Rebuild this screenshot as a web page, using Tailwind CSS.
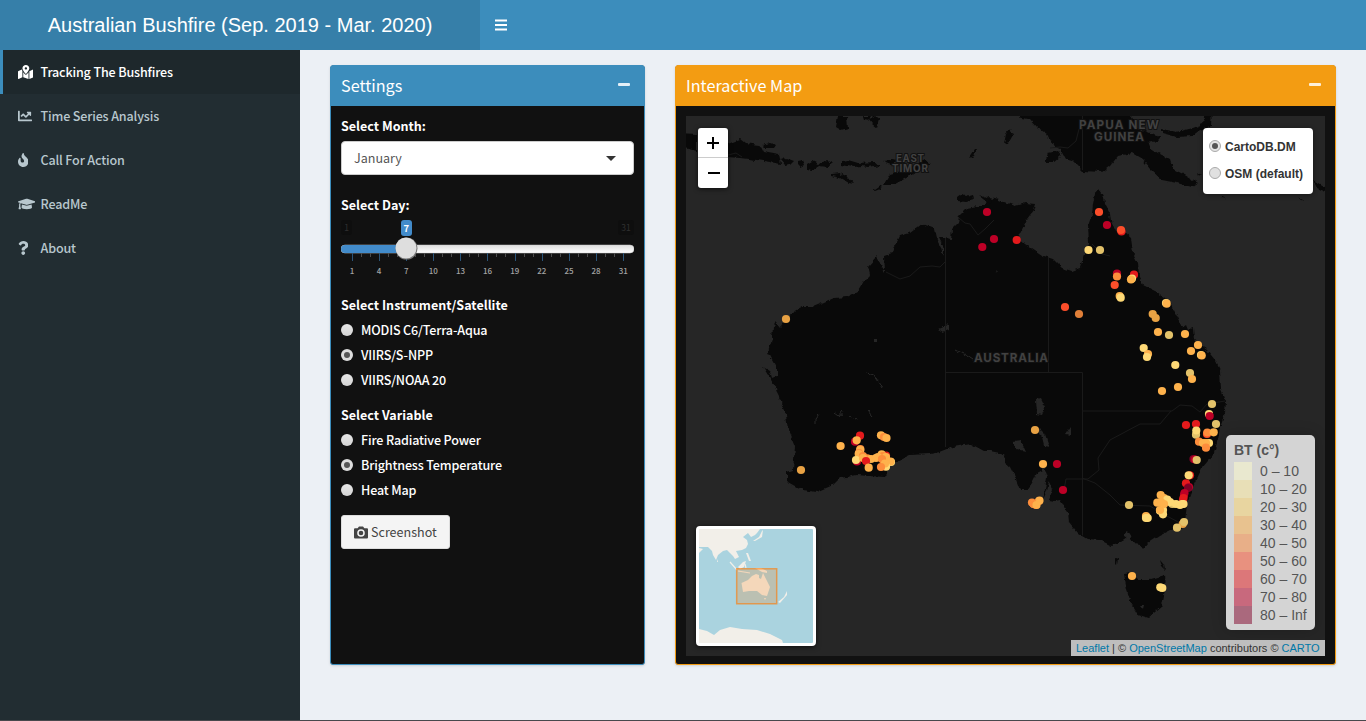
<!DOCTYPE html>
<html lang="en">
<head>
<meta charset="utf-8">
<title>Australian Bushfire (Sep. 2019 - Mar. 2020)</title>
<script src="https://cdn.jsdelivr.net/npm/@tailwindcss/browser@4"></script>
</head>
<body class="relative flex h-[721px] w-[1366px] flex-col overflow-hidden bg-[#ecf0f5] font-['Noto_Sans_CJK_SC',sans-serif] text-[12.55px] leading-5 text-[#333]">
<header class="flex h-[50px] shrink-0 bg-[#3c8dbc] text-white">
  <div class="flex w-[480px] items-center justify-center bg-[#367fa9] font-['Liberation_Sans',sans-serif] text-[20px]">Australian Bushfire (Sep. 2019 - Mar. 2020)</div>
  <div class="flex items-center px-[15px]"><svg class="h-3 w-3" viewBox="0 0 12 12" fill="#fff"><path d="M0 0.500h12v2H0zM0 5h12v2H0zM0 9.500h12v2H0z"/></svg></div>
</header>
<div class="flex min-h-0 flex-1">
  <aside class="w-[300px] shrink-0 bg-[#222d32] font-medium tracking-[-0.15px] text-[#b8c7ce]">
    <nav class="flex flex-col">
      <a class="flex h-11 items-center border-l-3 border-[#3c8dbc] bg-[#1e282c] pl-[14.500px] text-white"><span class="w-[23px]"><svg class="h-3.5 w-[15.75px]" viewBox="0 0 576 512" fill="currentColor"><path d="M288 0c-69.59 0-126 56.41-126 126 0 56.26 82.35 158.8 113.9 196.02 6.39 7.54 17.82 7.54 24.2 0C331.65 284.8 414 182.26 414 126 414 56.41 357.59 0 288 0zm0 168c-23.2 0-42-18.8-42-42s18.8-42 42-42 42 18.8 42 42-18.8 42-42 42zM20.12 215.95A32.006 32.006 0 0 0 0 245.66v250.32c0 11.32 11.43 19.06 21.94 14.86L160 448V214.92c-8.84-15.98-16.07-31.54-21.25-46.42L20.12 215.95zM288 359.67c-14.07 0-27.38-6.18-36.51-16.96-19.66-23.2-40.57-49.62-59.49-76.72v182l192 64V266c-18.92 27.09-39.82 53.52-59.49 76.72-9.13 10.77-22.44 16.95-36.51 16.95zm266.06-198.51L416 224v288l139.88-55.95A31.996 31.996 0 0 0 576 426.34V176.02c0-11.32-11.43-19.06-21.94-14.86z"/></svg></span><span>Tracking The Bushfires</span></a>
      <a class="flex h-11 items-center border-l-3 border-transparent pl-[14.500px]"><span class="w-[23px]"><svg class="h-3.5 w-3.5" viewBox="0 0 512 512" fill="currentColor"><path d="M496 384H64V80c0-8.84-7.16-16-16-16H16C7.16 64 0 71.16 0 80v336c0 17.67 14.33 32 32 32h464c8.84 0 16-7.16 16-16v-32c0-8.84-7.16-16-16-16zM464 96H345.94c-21.38 0-32.09 25.85-16.97 40.97l32.4 32.4L288 242.75l-73.37-73.37c-12.5-12.5-32.76-12.5-45.25 0l-68.69 68.69c-6.25 6.25-6.25 16.38 0 22.63l22.62 22.62c6.25 6.25 16.38 6.25 22.63 0L192 237.25l73.37 73.37c12.5 12.5 32.76 12.5 45.25 0l96-96 32.4 32.4c15.12 15.12 40.97 4.41 40.97-16.97V112c.01-8.84-7.15-16-15.99-16z"/></svg></span><span>Time Series Analysis</span></a>
      <a class="flex h-11 items-center border-l-3 border-transparent pl-[14.500px]"><span class="w-[23px]"><svg class="h-3.5 w-[10.5px]" viewBox="0 0 384 512" fill="currentColor"><path d="M216 23.86c0-23.8-30.65-32.77-44.15-13.04C48 191.85 224 200 224 288c0 35.63-29.11 64.46-64.85 63.99-35.17-.45-63.15-29.77-63.15-64.94v-85.51c0-21.7-26.47-32.23-41.43-16.5C27.8 213.16 0 261.33 0 320c0 105.87 86.13 192 192 192s192-86.13 192-192c0-170.29-168-193-168-296.14z"/></svg></span><span>Call For Action</span></a>
      <a class="flex h-11 items-center border-l-3 border-transparent pl-[14.500px]"><span class="w-[23px]"><svg class="h-3.5 w-[17.5px]" viewBox="0 0 640 512" fill="currentColor"><path d="M622.34 153.2L343.4 67.5c-15.2-4.67-31.6-4.67-46.79 0L17.66 153.2c-23.54 7.23-23.54 38.36 0 45.59l48.63 14.94c-10.67 13.19-17.23 29.28-17.88 46.9C38.78 266.15 32 276.11 32 288c0 10.78 5.68 19.85 13.86 25.65L20.33 428.53C18.11 438.52 25.71 448 35.94 448h56.11c10.24 0 17.84-9.48 15.62-19.47L82.14 313.65C90.32 307.85 96 298.78 96 288c0-11.57-6.47-21.25-15.66-26.87.76-15.02 8.44-28.3 20.69-36.72L296.6 284.5c9.06 2.78 26.44 6.25 46.79 0l278.95-85.7c23.55-7.24 23.55-38.36 0-45.6zM352.79 315.09c-28.53 8.76-52.84 3.92-65.59 0l-145.02-44.55L128 384c0 35.35 85.96 64 192 64s192-28.65 192-64l-14.18-113.47-145.03 44.56z"/></svg></span><span>ReadMe</span></a>
      <a class="flex h-11 items-center border-l-3 border-transparent pl-[14.500px]"><span class="w-[23px]"><svg class="h-3.5 w-[10.5px]" viewBox="0 0 384 512" fill="currentColor"><path d="M202.021 0C122.202 0 70.503 32.703 29.914 91.026c-7.363 10.58-5.093 25.086 5.178 32.874l43.138 32.709c10.373 7.865 25.132 6.026 33.253-4.148 25.049-31.381 43.63-49.449 82.757-49.449 30.764 0 68.816 19.799 68.816 49.631 0 22.552-18.617 34.134-48.993 51.164-35.423 19.86-82.299 44.576-82.299 106.405V320c0 13.255 10.745 24 24 24h72.471c13.255 0 24-10.745 24-24v-5.773c0-42.86 125.268-44.645 125.268-160.627C377.504 66.256 286.902 0 202.021 0zM192 373.459c-38.196 0-69.271 31.075-69.271 69.271 0 38.195 31.075 69.27 69.271 69.27s69.271-31.075 69.271-69.271-31.075-69.27-69.271-69.27z"/></svg></span><span>About</span></a>
    </nav>
  </aside>
  <main class="flex items-start gap-[30px] pt-[15px] pl-[30px]">
    <section class="flex h-[600px] w-[315px] flex-col rounded-[3px] border border-[#3c8dbc] bg-[#111] shadow-sm">
      <div class="flex h-10 shrink-0 items-center justify-between bg-[#3c8dbc] pr-3.5 pb-[3px] pl-2.5 text-white"><h3 class="text-[16.200px] leading-5">Settings</h3><span class="h-[3px] w-3 rounded-[1px] bg-[#e4f0f8]"></span></div>
      <div class="flex flex-col px-2.5 pt-2.5 text-white">
        <label class="h-[25px] font-bold">Select Month:</label>
        <div class="flex h-[34px] items-center justify-between rounded-[4px] border border-[#ccc] bg-white pr-[17px] pl-3 text-[#555]"><span>January</span><svg class="h-[5px] w-[10px]" viewBox="0 0 10 5"><path d="M0 0h10L5 5z" fill="#333"/></svg></div>
        <label class="mt-5 h-5 font-bold">Select Day:</label>
        <svg class="h-[65px] w-[293px]" viewBox="341 215 293 65" id="slider">
          <defs><linearGradient id="bar" x1="0" y1="0" x2="0" y2="1"><stop offset="0" stop-color="#ddd"/><stop offset="1" stop-color="#fff"/></linearGradient></defs>
          <g font-size="8.5" text-anchor="middle" fill="#303030"><rect x="341" y="220" width="11" height="15" rx="3" fill="#0e0e0e"/><text x="346.5" y="231">1</text><rect x="618" y="220" width="16" height="15" rx="3" fill="#0e0e0e"/><text x="626" y="231">31</text></g>
          <rect x="341" y="245" width="293" height="8" rx="4" fill="url(#bar)" stroke="#ccc" stroke-width=".5"/>
          <path d="M406 245h-61a4 4 0 0 0 0 8h61z" fill="#428bca"/>
          <g id="ticks"></g>
          <rect x="401" y="220" width="11" height="16" rx="3" fill="#428bca"/><text x="406.4" y="231.5" font-size="9.5" font-weight="700" fill="#fff" text-anchor="middle">7</text>
          <circle cx="406.5" cy="248.6" r="11" fill="#777"/><circle cx="406" cy="248" r="10.5" fill="#dedede"/>
        </svg>
        <label class="mt-[15px] h-5 font-bold">Select Instrument/Satellite</label>
        <div class="mt-[5px] flex flex-col gap-[5px] font-medium tracking-[-0.15px]">
          <div class="flex items-center gap-2"><i class="size-3 rounded-full bg-linear-to-b from-[#e8e8e8] to-[#d4d4d4]"></i>MODIS C6/Terra-Aqua</div>
          <div class="flex items-center gap-2"><i class="flex size-3 items-center justify-center rounded-full bg-[#dcdcdc]"><b class="size-1.5 rounded-full bg-[#555]"></b></i>VIIRS/S-NPP</div>
          <div class="flex items-center gap-2"><i class="size-3 rounded-full bg-linear-to-b from-[#e8e8e8] to-[#d4d4d4]"></i>VIIRS/NOAA 20</div>
        </div>
        <label class="mt-[15px] h-5 font-bold">Select Variable</label>
        <div class="mt-[5px] flex flex-col gap-[5px] font-medium tracking-[-0.15px]">
          <div class="flex items-center gap-2"><i class="size-3 rounded-full bg-linear-to-b from-[#e8e8e8] to-[#d4d4d4]"></i>Fire Radiative Power</div>
          <div class="flex items-center gap-2"><i class="flex size-3 items-center justify-center rounded-full bg-[#dcdcdc]"><b class="size-1.5 rounded-full bg-[#555]"></b></i>Brightness Temperature</div>
          <div class="flex items-center gap-2"><i class="size-3 rounded-full bg-linear-to-b from-[#e8e8e8] to-[#d4d4d4]"></i>Heat Map</div>
        </div>
        <div class="mt-[15px] flex h-[34px] w-[109px] items-center gap-[3px] rounded-[3px] border border-[#ddd] bg-[#f4f4f4] pl-3 text-[#444]"><svg class="h-[13px] w-3.5" viewBox="0 0 14 13"><path fill="#444" fill-rule="evenodd" d="M1 2.2h2.6L5 .6h4l1.400 1.600H13a1 1 0 0 1 1 1V11.500a1 1 0 0 1-1 1H1a1 1 0 0 1-1-1V3.200a1 1 0 0 1 1-1zM7 3.200a3.800 3.800 0 1 0 0 7.600 3.800 3.800 0 0 0 0-7.600zM7 4.700a2.300 2.300 0 1 1 0 4.600 2.300 2.300 0 0 1 0-4.600z"/></svg><span>Screenshot</span></div>
      </div>
    </section>
    <section class="flex h-[600px] w-[661px] flex-col rounded-[3px] border border-[#f39c12] bg-[#111] shadow-sm">
      <div class="flex h-10 shrink-0 items-center justify-between bg-[#f39c12] pr-3.5 pb-[3px] pl-2.5 text-white"><h3 class="text-[16.200px] leading-5">Interactive Map</h3><span class="h-[3px] w-3 rounded-[1px] bg-[#fdf0dc]"></span></div>
      <div class="relative mt-2.5 ml-2.5 h-[540px] w-[639px] overflow-hidden bg-[#262626] font-['Liberation_Sans',sans-serif]">
        <svg class="block h-[540px] w-[639px]" viewBox="686 116 639 540">
          <defs><filter id="coast" x="0" y="0" width="1" height="1" color-interpolation-filters="sRGB"><feTurbulence type="fractalNoise" baseFrequency=".16" numOctaves="3" seed="4" result="n"/><feDisplacementMap in="SourceGraphic" in2="n" scale="5" xChannelSelector="R" yChannelSelector="G"/></filter></defs>
          <g filter="url(#coast)" fill="#090909">
            <path fill="none" d="M686 116h639v540H686z"/>
            <path d="M776 322L780 327 786 319 793 313 803 307 813 307 825 302 834 298 847 297 857 292 863 282 870 275 868 266 877 256 882 268 885 272 884 256 893 253 895 246 900 236 910 233 922 224 935 229 937 238 942 248 944 256 944 248 939 238 945 238 951 239 952 229 958 223 959 216 967 208 977 206 985 206 988 198 995 199 1010 204 1015 206 1025 203 1035 204 1033 211 1027 219 1018 238 1025 244 1043 256 1053 259 1062 268 1072 271 1080 268 1083 258 1089 243 1088 226 1092 214 1093 204 1095 194 1099 189 1103 194 1105 203 1110 213 1111 221 1115 231 1125 233 1131 238 1133 253 1138 263 1139 277 1143 285 1157 292 1165 298 1173 308 1180 323 1182 328 1186 325 1188 330 1193 328 1194 340 1207 350 1215 360 1220 370 1221 390 1226 402 1225 412 1220 427 1218 440 1213 455 1202 468 1193 487 1187 503 1185 522 1180 529 1170 530 1160 535 1148 543 1143 549 1140 544 1135 543 1127 537 1120 542 1112 546 1100 540 1088 539 1078 533 1069 522 1068 512 1060 500 1055 501 1049 500 1053 490 1049 482 1047 490 1043 500 1047 478 1043 466 1043 470 1037 473 1032 483 1027 490 1020 490 1015 477 1010 467 1005 463 1005 457 1000 453 990 451 984 451 971 444 953 447 940 452 930 454 910 455 893 463 885 477 868 476 857 475 840 478 833 485 817 492 803 490 787 481 787 472 793 470 795 447 788 430 786 415 782 403 777 393 776 388 768 375 763 367 770 371 772 378 777 376 777 368 768 352 772 340 773 327z"/>
            <path d="M1124 574L1130 573 1138 579 1150 579 1164 575 1165 590 1162 606 1155 612 1148 618 1138 615 1131 603 1127 590zM1030 504l4-4 9 0 0 4-7 3zM1115 558l3 1-1 6-2-2zM1160 560l4 5 1 5-3-3zM958 198l4-3 4 2 7-2 1 5-8 2-8-1zM979 195l8 3 5 3-3 2z"/>
            <path d="M680 134L697 135 697 151 680 147zM728 144L740 139 745 143 760 145 763 151 779 154 781 164 770 162 757 160 740 158 715 156 715 144zM762 145l8-2 6 2-2 3-9 0zM781 160l5-2 8 3-4 4-4 1zM798 161l5-1 2 6-4 2-3-3zM807 164l5-3 6 3 8-4 7 3-5 4-9-1-6 4-6-1zM842 161l6-1 10 3 17-1 4 3-10 2-7-1-9 1-11-2zM832 174l8-1 8 4 5 6-5-1-7-4-9-2zM884 184l6-10 15-4 20-10 5 3-20 13-15 8zM875 190l7-5-2 4-5 2zM838 116h9l1 12-7 2-5-3zM863 116h8l-3 5 8-5 4 3-3 9-5-4-3-4-5-1zM969 158l6-9 2 0-3 7-5 2zM1004 144l2-10 4-5 3 6-4 7zM883 161l8-1 7 1-7 3z"/>
            <path d="M1010 110L1020 118 1030 119 1038 128 1047 134 1053 146 1060 149 1065 158 1072 160 1083 171 1102 172 1110 166 1118 156 1132 153 1142 159 1150 169 1162 180 1177 183 1192 187 1198 183 1183 174 1173 169 1170 159 1158 153 1150 148 1148 143 1158 141 1160 136 1150 133 1138 128 1130 116 1130 110zM1045 162l3-9 10-2 3 4-8 7zM1162 129L1177 132 1193 128 1203 124 1205 110 1212 110 1211 125 1200 130 1192 136 1177 137 1162 133zM1313 180l5 3 10 6-2 3-9-4zM1197 172l5 4-4-1zM1205 188l5 4-6-1zM1222 197l5 2-5-1zM1297 197l8 4-4-1z"/>
            <g fill="#262626"><path d="M938 329l7-3 3-3 0 7-5 2zM1036 399l4-1 5 10-3 7-5-1zM1038 427l7 7 4 12-5-1-2-8zM1013 442l8-1 5 11-5-1-8-5zM1065 435l6-9 0 10zM1123 535l5-4 4 6-4 2zM1140 605l4 0-1 4zM873 338l3 0 0 4-3 0zM996 270l2 2-1 2zM1069 360l3 0z"/></g>
            <path fill="none" stroke="#292929" d="M867 373l7 2 4 6 4 7M955 350l12 6 6 4M815 425l0-7 3-4M834 412l5 4 4-5M850 416l8 4M868 410l5 6"/>
          </g>
          <g fill="none" stroke="#1a1a1a" stroke-width="1"><path d="M945.500 238V447M945.500 372.500H1082.500V535M1048.500 258V372.500M1082.500 411H1172L1180 405 1192 406 1200 412 1207 404 1225 401M1171 411L1160 424 1140 424 1110 440 1098 458 1099 470 1088 479 1066 479 1064 490M1082 478L1095 483 1110 495 1120 505 1150 506 1165 515 1180 523M1082.500 116V170M886 272l6 3 8 4 10-3 10-9 12-1 8 1 5-5M959 218l6 5 5 1 8 11 7-6 9-9M728 155l8-2 6 4M1050 148l10-1 8 1 8-7 3-12M1092 244l10 10 8 2"/></g>
          <g font-family="Inter,sans-serif" font-weight="700" fill="#414141" stroke="#111" stroke-width="2" paint-order="stroke" text-anchor="middle">
            <g font-size="11.700"><text x="1119" y="128.500" textLength="80">PAPUA NEW</text><text x="1119" y="141" textLength="50">GUINEA</text><text x="1011" y="361.500" textLength="74">AUSTRALIA</text></g>
            <g font-size="9.800"><text x="910" y="162" textLength="28">EAST</text><text x="910" y="172" textLength="36">TIMOR</text></g>
          </g>
          <g id="fires"></g>
        </svg>
        <div class="absolute top-3 left-3 flex h-[60px] w-[30px] flex-col rounded-[3px] bg-white shadow-[0_1px_5px_rgba(0,0,0,.65)]">
          <span class="flex h-[30px] items-center justify-center border-b border-[#ccc]"><svg class="h-3 w-3" viewBox="0 0 12 12"><path d="M0 6h12M6 0v12" stroke="#000" stroke-width="2"/></svg></span>
          <span class="flex h-[30px] items-center justify-center pl-[2px]"><svg class="h-3 w-3" viewBox="0 0 12 12"><path d="M0 6h12" stroke="#000" stroke-width="2"/></svg></span>
        </div>
        <div class="absolute top-3 right-3 flex h-[66px] w-[110px] flex-col gap-[7px] rounded-[4px] bg-white pt-[9px] pl-1.5 text-[12px] font-bold text-[#333] shadow-[0_1px_5px_rgba(0,0,0,.4)]">
          <div class="flex items-center gap-1"><i class="-mt-[3px] flex size-3 items-center justify-center rounded-full border border-[#aaa] bg-[#e4e4e4]"><b class="size-1.5 rounded-full bg-[#555]"></b></i><span>CartoDB.DM</span></div>
          <div class="flex items-center gap-1"><i class="-mt-[3px] size-3 rounded-full border border-[#aaa] bg-[#e0e0e0]"></i><span>OSM (default)</span></div>
        </div>
        <div class="absolute bottom-2.5 left-2.5 size-[120px] rounded-[4px] border-3 border-white bg-[#aad3df] shadow-[0_1px_5px_rgba(0,0,0,.65)]">
          <svg class="size-[114px]" viewBox="699 529 114 114"><g fill="#f2efe9"><path d="M699 529H760L757 533 755 535 751 537 748 533 743 537 747 540 748 544 746 548 742 550 736 551 739 557 735 559 733 556 730 553 727 550 723 551 718 555 716 560 713 555 712 551 708 547 699 547zM699 548l4 1-4 4zM717 559l1 3-1 0zM738 567l5-5 3-1-2 6-4 2zM746 553l2 0 3 8-2 0zM753 541l6-4 3-6 1-1-1 7-7 4zM755 568l6 0 6 3 0 2-5-1zM786 593l1-2 0 4-7 8-2-1 6-5zM699 629L707 631 714 635 720 630 730 627 742 629 757 630 770 634 782 640 783 643H699z"/><path d="M730 562l7 8M738 571l12 2M745 564l1 4" fill="none" stroke="#f2efe9" stroke-width="1.200"/><path d="M741.500 583L748 580 752 576 756 574 759 575 759 578 761 579 763 573 766 579 770 587 767 596 762 595 757 591 749 591 743 592zM764 598l2 0-1 2z"/></g><path d="M736.700 568.700h40v35h-40z" fill="#ff7800" fill-opacity=".2" stroke="#ff7800" stroke-opacity=".6" stroke-width="1.500"/></svg>
        </div>
        <div class="absolute right-2.5 bottom-[26px] h-[195px] w-[89px] rounded-[5px] bg-[#d4d4d4] px-2 pt-1.5 text-[14px] leading-[18px] text-[#555] shadow-[0_0_15px_rgba(0,0,0,.2)]">
          <div class="h-[21px] font-bold">BT (c°)</div>
          <div class="flex items-center gap-2"><i class="size-[18px] bg-[#e9e8cf]"></i>0 – 10</div>
          <div class="flex items-center gap-2"><i class="size-[18px] bg-[#e8dfb7]"></i>10 – 20</div>
          <div class="flex items-center gap-2"><i class="size-[18px] bg-[#e8d5a0]"></i>20 – 30</div>
          <div class="flex items-center gap-2"><i class="size-[18px] bg-[#e8c28f]"></i>30 – 40</div>
          <div class="flex items-center gap-2"><i class="size-[18px] bg-[#e8af88]"></i>40 – 50</div>
          <div class="flex items-center gap-2"><i class="size-[18px] bg-[#e8917f]"></i>50 – 60</div>
          <div class="flex items-center gap-2"><i class="size-[18px] bg-[#dc7779]"></i>60 – 70</div>
          <div class="flex items-center gap-2"><i class="size-[18px] bg-[#c8697d]"></i>70 – 80</div>
          <div class="flex items-center gap-2 whitespace-nowrap"><i class="size-[18px] bg-[#aa697d]"></i>80 – Inf</div>
        </div>
        <div class="absolute right-0 bottom-0 h-4 w-[254px] bg-[#bebebe] pl-[5px] text-[11px] leading-4 whitespace-nowrap text-[#333]"><span class="text-[#0078a8]">Leaflet</span> | © <span class="text-[#0078a8]">OpenStreetMap</span> contributors © <span class="text-[#0078a8]">CARTO</span></div>
      </div>
    </section>
  </main>
</div>
<div class="absolute bottom-0 left-0 h-px w-full bg-[#48484c]"></div>
<script>
const NS='http://www.w3.org/2000/svg';
function add(parent,tag,attrs,text){const e=document.createElementNS(NS,tag);for(const k in attrs)e.setAttribute(k,attrs[k]);if(text)e.textContent=text;parent.appendChild(e);}
const ticks=document.getElementById('ticks');
for(let d=1;d<=31;d++){const x=352.3+(d-1)*9.04,major=(d-1)%3===0;
  add(ticks,'rect',{x:Math.floor(x),y:253,width:1,height:major?8:4,fill:major?'#2b5478':'#4c4c4c'});
  if(major)add(ticks,'text',{x:x-.3,y:274,'font-size':8,'font-weight':500,fill:'#a3a3a3','text-anchor':'middle'},String(d));}
const C={y:'#fed976',o:'#feb24c',d:'#fd8d3c',f:'#fc4e2a',r:'#e31a1c',c:'#bd0026',m:'#800026',k:'#e3c26a',a:'#e8a244',b:'#e07f38'};
const data='c987,212 c994,239 c982.300,247 r1016.700,240 f1099,212 c1107,225 r1121.500,231.500 f1121,230 y1088.500,250 k1100,250 c1117,273.500 d1117,276.500 f1114.700,285 r1134,274.700 y1132,278.500 o1131,279.500 o1119.700,296 y1120.700,297.700 f1065,307 b1079,314 y1166,303 o1166.700,303.700 a1152.700,314 a1155.700,318 o1158,332 k1169,335 o1185,334 o1198,345 o1191,351 y1201,355 o1201.700,355.500 y1143.700,348 o1148,354 y1147,357 y1175.300,365 k1190,373 o1192,379 o1178,387 o1162,391 k1212,404 y1209,414 c1209.700,416 r1186,425 r1196,424 k1216,424 k1196,434.700 y1196.300,430.500 f1207,434 d1207.300,432.500 o1213.700,432.300 d1199,441.700 y1209,443 o1206,443 o1203,443 d1206,447.700 m1193.500,459 c1195,459.500 k1196.700,460 r1190,475.300 y1188.700,475.300 a1035,430 o1043,464 c1057,464 c1063,490 d1032,502.500 f1036,505 o1034,504 d1039,501 o1039.500,500.500 d1033.500,504 o1036.500,505 r1186,483.300 c1189,487 m1188,488 c1184.500,493 c1184,495 r1183.500,498 r1183,500 y1180,505 y1182,504 y1183.500,504 k1172.300,504 y1176,504 k1129,505 o1160.700,495 o1164,498 y1167.300,499.500 y1170,502 o1157.300,502.700 o1161,502 y1163,510 o1164,504 y1160,510.700 y1163,514.300 o1160,510 o1146,516 y1147.700,518 y1146,518 a1182.700,524 k1184,522 k1177,527.700 o1132,576 y1160.300,587.300 y1162.300,588 a786,319 a801,470 o840.600,446 r860,435.700 c855,441.700 o856.700,440.300 o881,435.300 d884,437 o886.500,438 d860.300,449 o860.300,450 d859,453 o858.700,454 d863,456 c857,461.500 y856,460 d867.300,458.300 o871,459 o863,458 r866,461 o868.700,467.700 r886,455.500 o881.700,454.300 d883,456 o878,457 o876,458 o886,457 y891,462 o890.500,461.500 o884,461 d882,459 y886,466.700 o885,463.500 d881,467';
const fires=document.getElementById('fires');
data.split(' ').forEach(s=>{const p=s.slice(1).split(',');add(fires,'circle',{cx:p[0],cy:p[1],r:4.1,fill:C[s[0]]});});
</script>
</body>
</html>
